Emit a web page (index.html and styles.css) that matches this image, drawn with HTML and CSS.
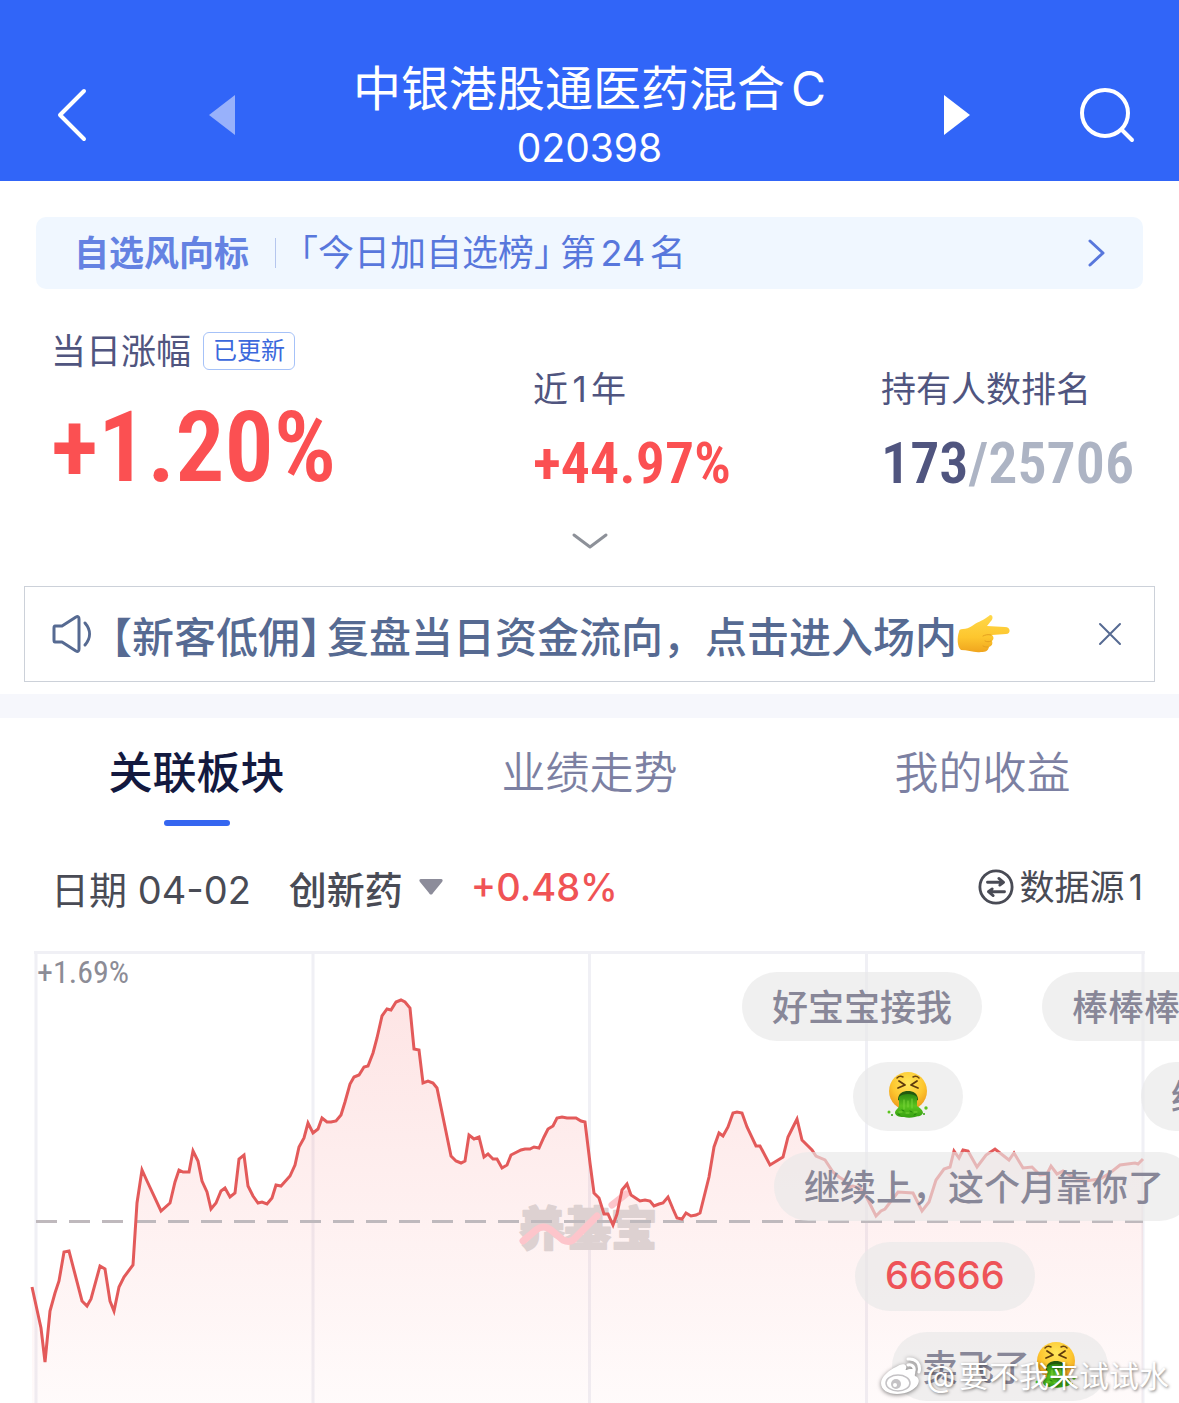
FILE: index.html
```html
<!DOCTYPE html>
<html lang="zh-CN">
<head>
    <meta charset="UTF-8">
    <meta name="viewport" content="width=device-width, initial-scale=1">
    <title>中银港股通医药混合C</title>
    <link rel="stylesheet" href="styles.css">
</head>
<body>

    <!-- 共用图标 -->
    <svg class="sprite" aria-hidden="true">
        <defs>
            <radialGradient id="faceFill" cx="0.5" cy="0.3" r="0.7">
                <stop offset="0" stop-color="#ffe75a"/>
                <stop offset="0.6" stop-color="#fdc62f"/>
                <stop offset="1" stop-color="#ee9a1c"/>
            </radialGradient>
            <linearGradient id="vomitFill" x1="0" y1="0" x2="0" y2="1">
                <stop offset="0" stop-color="#2c8a10"/>
                <stop offset="0.5" stop-color="#5cc41f"/>
                <stop offset="1" stop-color="#35a012"/>
            </linearGradient>
            <linearGradient id="handFill" x1="0" y1="0" x2="0" y2="1">
                <stop offset="0" stop-color="#ffd84a"/>
                <stop offset="0.6" stop-color="#fdc62e"/>
                <stop offset="1" stop-color="#f0a51e"/>
            </linearGradient>
        </defs>
        <symbol id="vomit" viewBox="0 0 44 48">
            <circle cx="22" cy="20" r="19" fill="url(#faceFill)"/>
            <path d="M11 7c2-2 4-2 6-1M33 7c-2-2-4-2-6-1" fill="none" stroke="#6b4410" stroke-width="1.5" stroke-linecap="round"/>
            <path d="M13 10l6 4-7 3M31 10l-6 4 7 3" fill="none" stroke="#5e3a0c" stroke-width="1.8" stroke-linecap="round" stroke-linejoin="round"/>
            <path d="M12 29c0-7 5-9 10-9s10 2 10 9c-2 2-18 2-20 0z" fill="#23590f"/>
            <path d="M13 26c3-4 15-4 18 0v9c3 2 6 4 6 7-2 4-6 3-8 4-4 1-8 1-11 0-3 0-8 0-9-4 0-3 3-4 4-7z" fill="url(#vomitFill)"/>
            <path d="M18 29v9M22 30v6M26 28v9M13 41h3M20 42h3M28 41h3" fill="none" stroke="#7bd43a" stroke-width="1" stroke-linecap="round"/>
            <path d="M16 39l2 1M24 40l2 1M12 43l2 1M30 43l-2 1" stroke="#23850b" stroke-width="1" stroke-linecap="round"/>
            <circle cx="3" cy="41" r="1.5" fill="#5cc41f"/>
            <circle cx="6" cy="44" r="1" fill="#35a012"/>
            <circle cx="40" cy="37" r="1.7" fill="#5cc41f"/>
            <circle cx="38" cy="43" r="1" fill="#35a012"/>
        </symbol>
    </svg>

    <header class="header">
        <div class="header-side left">
            <button class="icon-btn" aria-label="返回">
                <svg width="30" height="54" viewBox="0 0 30 54"><path d="M27 3L3 27l24 24" fill="none" stroke="#fff" stroke-width="4" stroke-linecap="round" stroke-linejoin="round"/></svg>
            </button>
            <button class="icon-btn prev" aria-label="上一只">
                <svg width="28" height="42" viewBox="0 0 28 42"><path d="M27 1v40L1 21z" fill="#98b1fb"/></svg>
            </button>
        </div>
        <div class="fund">
            <h1>中银港股通医药混合C</h1>
            <p>020398</p>
        </div>
        <div class="header-side right">
            <button class="icon-btn" aria-label="下一只">
                <svg width="28" height="42" viewBox="0 0 28 42"><path d="M1 1v40l26-20z" fill="#fff"/></svg>
            </button>
            <button class="icon-btn search" aria-label="搜索">
                <svg width="56" height="56" viewBox="0 0 56 56"><circle cx="26" cy="26" r="23" fill="none" stroke="#fff" stroke-width="4"/><path d="M43 43l10 10" stroke="#fff" stroke-width="4" stroke-linecap="round"/></svg>
            </button>
        </div>
    </header>

    <a class="banner" href="#">
        <strong>自选风向标</strong>
        <span class="banner-text"><span class="half">「今日加自选榜」</span><span>第24名</span></span>
        <svg width="20" height="32" viewBox="0 0 20 32"><path d="M3 4l13 12L3 28" fill="none" stroke="#5877dc" stroke-width="3" stroke-linecap="round" stroke-linejoin="round"/></svg>
    </a>

    <section class="stats">
        <div class="stat">
            <p class="label">当日涨幅 <span class="badge">已更新</span></p>
            <p class="num big">+1.20%</p>
        </div>
        <div class="stat small">
            <p class="label">近1年</p>
            <p class="num">+44.97%</p>
        </div>
        <div class="stat small">
            <p class="label">持有人数排名</p>
            <p class="num rank">173<span>/25706</span></p>
        </div>
    </section>
    <button class="icon-btn expand" aria-label="展开">
        <svg width="38" height="20" viewBox="0 0 38 20"><path d="M3 4l16 12L35 4" fill="none" stroke="#8d9199" stroke-width="3" stroke-linecap="round" stroke-linejoin="round"/></svg>
    </button>

    <div class="notice">
        <svg width="42" height="40" viewBox="0 0 42 40" fill="none" stroke="#566a92" stroke-width="3" stroke-linecap="round" stroke-linejoin="round"><path d="M4 12h7L25 3c2-1 3 0 3 2v30c0 2-1 3-3 2L11 28H4c-1 0-1-1-1-2V14c0-1 0-2 1-2z"/><path d="M34 9c6 7 6 15 0 22"/></svg>
        <a href="#"><span class="half">【新客低佣】</span><span>复盘当日资金流向，点击进入场内</span></a>
        <svg class="hand" width="54" height="40" viewBox="0 0 54 40">
            <path d="M2 18c0-2 1-3 4-3 3 0 6-1 9-3 5-4 10-5 14-8 2-1 3-3 5-3 2 1 2 4 0 6l-4 5 18 1c6 0 6 7 1 7l-14 1c2 2 2 4 0 6 1 3 0 5-3 6-1 4-3 5-8 5-7 1-13-2-20-2-4-3-4-13-2-18z" fill="url(#handFill)"/>
            <path d="M34 21c-3-1-6 0-8 1M34 27c-2 1-4 1-6 0M31 33c-2 0-3 0-5-1" fill="none" stroke="#e5a01f" stroke-width="1" stroke-linecap="round"/>
        </svg>
        <button class="icon-btn close" aria-label="关闭">
            <svg width="24" height="24" viewBox="0 0 24 24"><path d="M2 2l20 20M22 2L2 22" stroke="#566a92" stroke-width="2" stroke-linecap="round"/></svg>
        </button>
    </div>

    <nav class="tabs">
        <button class="active">关联板块</button>
        <button>业绩走势</button>
        <button>我的收益</button>
    </nav>

    <div class="toolbar">
        <span class="date">日期 04-02</span>
        <button class="sector">创新药
            <svg width="24" height="16" viewBox="0 0 24 16"><path d="M2 0h20c2 0 2 2 1 3L14 14c-1 2-3 2-4 0L1 3C0 2 0 0 2 0z" fill="#8c8c9a"/></svg>
        </button>
        <span class="change">+0.48%</span>
        <button class="source">
            <svg width="36" height="36" viewBox="0 0 38 38" fill="none" stroke="#494b55" stroke-width="3" stroke-linecap="round" stroke-linejoin="round"><circle cx="19" cy="19" r="17"/><path d="M10 14h17l-5-4M27 14l-4 3M28 24H11l5 4M11 24l4-3"/></svg>
            数据源1
        </button>
    </div>

    <section class="chart">
        <svg class="plot" viewBox="0 950 1179 453">
            <defs>
                <linearGradient id="area" gradientUnits="userSpaceOnUse" x1="0" y1="1000" x2="0" y2="1420">
                    <stop offset="0" stop-color="#f55050" stop-opacity="0.15"/>
                    <stop offset="1" stop-color="#f55050" stop-opacity="0.02"/>
                </linearGradient>
            </defs>
            <path d="M34 952.500H1145M36 952V1403M313 952V1403M589.500 952V1403M866.500 952V1403M1143 952V1403" fill="none" stroke="#f0f0f5" stroke-width="3"/>
            <path id="fill" fill="url(#area)"/>
            <g class="brand">
                <text x="519" y="1245">养基宝</text>
                <path d="M523 1241l13-11c5-4 10-4 15 0l12 10c4 2 7 2 10 0l24-24M612 1205l14-11"/>
            </g>
            <path d="M36 1221.500H1143" stroke="#bfb9bd" stroke-width="3" stroke-dasharray="21 12"/>
            <polyline id="line" fill="none" stroke="#e35a5a" stroke-width="3"/>
        </svg>
        <span class="axis-max">+1.69%</span>

        <div class="bullet b1">好宝宝接我</div>
        <div class="bullet b2">棒棒棒棒</div>
        <div class="bullet b3"><svg width="50" height="48"><use href="#vomit"/></svg></div>
        <div class="bullet b4">继续</div>
        <div class="bullet b5">继续上，这个月靠你了</div>
        <div class="bullet b6">66666</div>
        <div class="bullet b7">卖飞了<svg width="44" height="48"><use href="#vomit"/></svg></div>

        <div class="weibo">
            <svg width="42" height="38" viewBox="0 0 42 38">
                <path d="M16 10c4-3 9-4 10-1 1 2-1 4 0 4 3-1 8-2 9 1 1 2-1 4 0 5 3 1 5 4 3 8-3 6-12 10-21 10C8 37 1 33 1 26c0-6 8-13 15-16z" fill="#fff"/>
                <ellipse cx="18" cy="26" rx="12" ry="8" fill="#fff" stroke="#c4c2c5" stroke-width="1.5"/>
                <circle cx="16" cy="27" r="5" fill="#c4c2c5"/>
                <circle cx="15" cy="28" r="2" fill="#fff"/>
                <path d="M28 2c8-1 13 5 11 13M28 8c4-1 7 2 6 6" fill="none" stroke="#fff" stroke-width="3" stroke-linecap="round"/>
            </svg>
            @要不我来试试水
        </div>
    </section>

    <script>
        // 分时走势
        const points = [
            [32,1287],[41,1328],[45,1362],[50,1311],[55,1293],[59,1281],[64,1252],[69,1251],[82,1301],[87,1306],[91,1299],
            [100,1266],[105,1269],[110,1301],[114,1311],[119,1287],[124,1277],[133,1265],[137,1203],[142,1170],[147,1181],
            [161,1211],[170,1203],[175,1182],[179,1170],[183,1172],[189,1172],[193,1151],[198,1161],[202,1181],[207,1192],
            [211,1209],[216,1203],[221,1191],[225,1188],[230,1197],[235,1193],[239,1159],[244,1155],[248,1186],[253,1196],
            [258,1203],[262,1202],[267,1204],[272,1198],[276,1185],[281,1186],[290,1176],[295,1165],[299,1147],[304,1138],
            [308,1123],[313,1133],[318,1129],[322,1118],[327,1122],[331,1122],[336,1121],[341,1115],[345,1102],[350,1084],
            [354,1077],[359,1075],[364,1067],[368,1066],[373,1053],[377,1038],[382,1016],[387,1009],[391,1010],[396,1002],
            [401,1000],[405,1002],[410,1008],[414,1049],[419,1050],[423,1083],[428,1081],[433,1083],[437,1088],[451,1156],
            [456,1161],[461,1163],[465,1161],[469,1135],[474,1139],[479,1137],[484,1157],[488,1154],[493,1159],[497,1159],
            [502,1168],[507,1165],[511,1155],[521,1150],[525,1149],[530,1149],[534,1147],[539,1148],[544,1137],[548,1129],
            [553,1126],[557,1118],[562,1117],[567,1118],[576,1118],[581,1121],[585,1122],[590,1163],[594,1193],[599,1198],
            [604,1214],[608,1214],[613,1225],[617,1214],[622,1190],[627,1184],[631,1195],[640,1201],[645,1200],[650,1201],
            [654,1206],[659,1204],[663,1203],[668,1197],[673,1209],[677,1218],[682,1219],[686,1213],[691,1216],[696,1215],
            [700,1213],[709,1177],[714,1147],[719,1133],[723,1136],[728,1127],[733,1113],[737,1112],[742,1113],[747,1127],
            [756,1146],[760,1146],[770,1165],[783,1157],[788,1137],[793,1127],[797,1119],[802,1140],[807,1145],[812,1150],
            [816,1156],[825,1160],[833,1172],[839,1177],[844,1180],[848,1187],[853,1186],[860,1188],[867,1198],[876,1216],
            [881,1211],[885,1209],[898,1192],[913,1193],[922,1211],[929,1202],[936,1180],[944,1169],[950,1167],[954,1151],
            [959,1158],[963,1150],[968,1151],[977,1167],[986,1155],[995,1149],[1009,1160],[1014,1153],[1023,1168],[1032,1167],
            [1040,1175],[1047,1174],[1051,1166],[1057,1174],[1063,1171],[1072,1177],[1085,1181],[1100,1179],[1110,1173],
            [1120,1165],[1135,1163],[1138,1164],[1143,1159]
        ];
        const line = points.map(p => p.join(",")).join(" ");
        document.getElementById("line").setAttribute("points", line);
        document.getElementById("fill").setAttribute("d", `M32 1403L${line}L1143 1403Z`);
    </script>
</body>
</html>
```
FILE: styles.css
```css
* {
    box-sizing: border-box;
}
body {
    margin: 0;
    background: #fff;
    color: #494b55;
    font-family: Inter, "Noto Sans CJK SC", sans-serif;
    text-autospace: normal;
    overflow-x: hidden;
}
h1, p {
    margin: 0;
    font-weight: 400;
}
button {
    background: none;
    border: none;
    padding: 0;
    color: inherit;
    font: inherit;
    cursor: pointer;
}
a {
    color: inherit;
    text-decoration: none;
}
svg {
    display: block;
    flex: none;
}
.sprite {
    position: absolute;
    width: 0;
    height: 0;
}
.half {
    font-feature-settings: "halt";
}

/* 顶部 */
.header {
    display: grid;
    grid-template-columns: 1fr auto 1fr;
    align-items: center;
    padding: 56px 0 7px;
    background: #3165f8;
    color: #fff;
    text-align: center;
}
.header-side {
    display: flex;
    align-items: center;
}
.header-side.left {
    padding-left: 57px;
}
.header-side.right {
    justify-content: flex-end;
    padding-right: 44px;
}
.prev {
    margin-left: 121px;
}
.search {
    margin-left: 108px;
}
.fund h1 {
    font-size: 48px;
    line-height: 66px;
}
.fund p {
    font-size: 39px;
    line-height: 52px;
}

/* 风向标 */
.banner {
    display: flex;
    align-items: center;
    height: 72px;
    margin: 36px 36px 0;
    padding: 0 36px 0 38px;
    border-radius: 10px;
    background: #f0f7ff;
    color: #5877dc;
    font-size: 35px;
    line-height: 40px;
}
.banner strong {
    padding-right: 26px;
    line-height: 30px;
    border-right: 1px solid #b5c6ee;
    color: #6482e2;
}
.banner-text {
    display: flex;
    gap: 8px;
    flex: 1;
    padding-left: 24px;
    font-size: 36px;
}

/* 数据 */
.stats {
    display: grid;
    grid-template-columns: 482fr 348fr 298fr;
    margin-top: 42px;
    padding-left: 51px;
}
.stat .label {
    display: flex;
    align-items: center;
    gap: 12px;
    height: 40px;
    color: #50557f;
    font-size: 35px;
    line-height: 40px;
}
.stat.small {
    padding-top: 38px;
}
.badge {
    padding: 0 9px;
    border: 1px solid #a6c2f8;
    border-radius: 6px;
    color: #3b68dc;
    font-size: 24px;
    line-height: 36px;
}
.num {
    margin-top: 22px;
    color: #fb5052;
    font-family: "Roboto Condensed", "Liberation Sans Narrow", Roboto, sans-serif;
    font-weight: 600;
    font-size: 58px;
    line-height: 64px;
    white-space: nowrap;
}
.num.big {
    font-size: 98px;
    line-height: 110px;
}
.num.rank {
    color: #50557f;
}
.num.rank span {
    color: #adb4c4;
}
.expand {
    display: block;
    margin: 28px auto 35px;
}

/* 公告 */
.notice {
    display: flex;
    align-items: center;
    height: 96px;
    margin: 0 24px 12px;
    padding: 0 32px 0 26px;
    border: 1px solid #ccd1d9;
    color: #566a92;
    font-size: 42px;
    font-weight: 500;
}
.notice a {
    display: flex;
    gap: 6px;
    margin-left: 18px;
}
.close {
    margin-left: auto;
}

/* 选项卡 */
.tabs {
    display: grid;
    grid-template-columns: repeat(3, 1fr);
    border-top: 24px solid #f6f7fc;
}
.tabs button {
    display: flex;
    flex-direction: column;
    align-items: center;
    gap: 17px;
    padding-top: 25px;
    color: #7c80a2;
    font-size: 44px;
    font-weight: 350;
    line-height: 60px;
}
.tabs .active {
    color: #13193f;
    font-weight: 500;
}
.tabs .active::after {
    content: "";
    width: 66px;
    height: 6px;
    border-radius: 3px;
    background: #3566f0;
}

.toolbar {
    display: flex;
    align-items: center;
    height: 50px;
    margin: 36px 36px 38px 51px;
    font-size: 38px;
}
.sector {
    display: flex;
    align-items: center;
    gap: 16px;
    margin: 0 28px 0 38px;
    font-weight: 500;
}
.change {
    color: #f05355;
    font-weight: 500;
}
.source {
    display: flex;
    align-items: center;
    gap: 5px;
    margin-left: auto;
    font-size: 35px;
    line-height: 36px;
}

/* 走势图 */
.chart {
    position: relative;
    overflow: hidden;
}
.plot {
    width: 100%;
}
.brand text {
    fill: #ddd1d1;
    stroke: #ddd1d1;
    stroke-width: 2;
    stroke-linejoin: round;
    font-size: 46px;
    font-weight: 900;
}
.brand path {
    fill: none;
    stroke: #fdc5cb;
    stroke-width: 7;
    stroke-linecap: round;
}
.axis-max {
    position: absolute;
    top: 4px;
    left: 37px;
    color: #8c8c96;
    font-family: "Roboto Condensed", "Liberation Sans Narrow", Roboto, sans-serif;
    font-size: 32px;
    line-height: 36px;
}

/* 弹幕 */
.bullet {
    position: absolute;
    display: flex;
    align-items: center;
    gap: 4px;
    height: 69px;
    padding: 0 30px 4px;
    border-radius: 35px;
    background: rgba(232, 232, 232, 0.65);
    color: #888798;
    font-size: 36px;
    font-weight: 500;
    white-space: nowrap;
}
.b1, .b2 {
    top: 22px;
}
.b3, .b4 {
    top: 112px;
}
.b1 {
    left: 742px;
}
.b2 {
    left: 1042px;
}
.b3 {
    left: 853px;
}
.b4 {
    left: 1141px;
}
.b5 {
    top: 202px;
    left: 774px;
}
.b6 {
    top: 292px;
    left: 855px;
    color: #ee5358;
    font-size: 38px;
}
.b7 {
    top: 382px;
    left: 892px;
}

.weibo {
    position: absolute;
    right: 10px;
    bottom: 6px;
    display: flex;
    align-items: center;
    gap: 4px;
    color: #fff;
    font-size: 30px;
    line-height: 42px;
    text-shadow: 1px 1px 3px rgba(0, 0, 0, 0.5);
}
.weibo svg {
    filter: drop-shadow(0 1px 2px rgba(0, 0, 0, 0.5));
}
```
